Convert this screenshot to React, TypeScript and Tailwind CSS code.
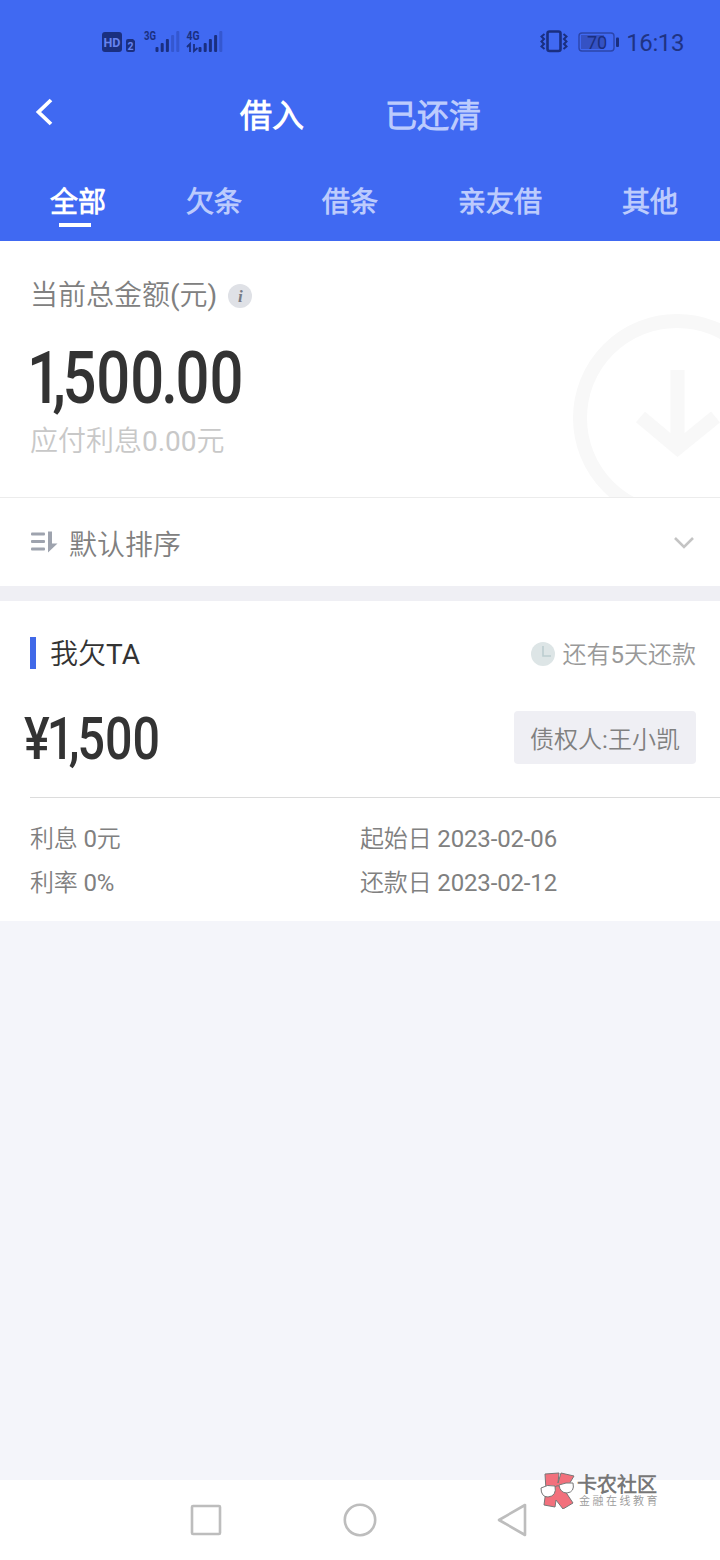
import { clsx } from "clsx";

const tabs = ["全部", "欠条", "借条", "亲友借", "其他"];

const details = [
    { left: "利息 0元", right: "起始日 2023-02-06" },
    { left: "利率 0%", right: "还款日 2023-02-12" },
];

function SignalBars({ active, x }: { active: number; x: number }) {
    const heights = [5, 9, 13, 17, 21];
    return (
        <>
            {heights.map((h, i) => (
                <rect
                    key={h}
                    x={x + i * 5.2}
                    y={52 - h}
                    width="3"
                    height={h}
                    rx="1"
                    fill="#1a2f80"
                    opacity={i < active ? 1 : 0.3}
                />
            ))}
        </>
    );
}

function StatusBar() {
    return (
        <div className="flex h-[84px] items-center justify-between pl-[100px] pr-[36px] text-[#1f3384]">
            <svg width="130" height="84" viewBox="100 0 130 84" className="font-bold">
                <rect x="102" y="32" width="20" height="20" rx="3" fill="#1a2f80" />
                <text x="103.5" y="47" fontSize="13" textLength="17" lengthAdjust="spacingAndGlyphs" fill="#6683f0">HD</text>
                <path d="M126 41q0-2 2-2h5l2 2v9q0 2-2 2h-5q-2 0-2-2z" fill="#1a2f80" />
                <text x="127.5" y="50" fontSize="10.5" fill="#6683f0">2</text>
                <text x="144" y="40" fontSize="13" textLength="12" lengthAdjust="spacingAndGlyphs" fill="#1a2f80">3G</text>
                <SignalBars active={3} x={155.5} />
                <text x="186.5" y="40" fontSize="13" textLength="13" lengthAdjust="spacingAndGlyphs" fill="#1a2f80">4G</text>
                <path d="M187 47l3-3v8M194 44v7l3.500-3" fill="none" stroke="#1a2f80" strokeWidth="1.8" />
                <SignalBars active={4} x={198.5} />
            </svg>
            <div className="flex items-center">
                <svg width="84" height="28" viewBox="537 28 84 28">
                    <rect x="547.5" y="31.5" width="13" height="19.5" rx="2" fill="none" stroke="#1a2f80" strokeWidth="2.6" />
                    <path d="M544.500 34l-3 2.500 2.500 2.500-2.500 2.500 2.500 2.500-2.500 2.500 3 2.500M563.500 34l3 2.500-2.500 2.500 2.500 2.500-2.500 2.500 2.500 2.500-3 2.500" fill="none" stroke="#1a2f80" strokeWidth="2" />
                    <rect x="579" y="33" width="35" height="18" rx="3" fill="none" stroke="#2b45ab" strokeWidth="1.4" />
                    <rect x="581" y="35" width="23" height="14" fill="#3552c4" />
                    <rect x="616" y="37.5" width="3" height="9.5" rx="1" fill="#1a2f80" />
                    <text x="597" y="48.5" fontSize="18" textAnchor="middle" fill="#1a2f80">70</text>
                </svg>
                <span className="ml-[5px] mt-0.5 text-[24px] leading-none tracking-[-0.4px]">16:13</span>
            </div>
        </div>
    );
}

function Header() {
    return (
        <header className="h-[241px] bg-[#4069f2] text-white">
            <StatusBar />
            <div className="flex h-[64px] items-center text-[32px] font-bold">
                <svg width="20" height="30" viewBox="0 0 20 30" className="-mt-2 ml-[35px] mr-[185px]" fill="none" stroke="white" strokeWidth="3.8">
                    <path d="M16 3 3.500 15 16 27" />
                </svg>
                <span>借入</span>
                <span className="ml-[81px] text-[#bccbfd]">已还清</span>
            </div>
            <nav className="flex gap-20 pl-[50px] pt-[34px] text-[28px] font-bold leading-[42px]">
                {tabs.map((tab, i) => (
                    <div key={tab} className={clsx("shrink-0", i > 0 && "text-[#bccbfd]")}>
                        {tab}
                        {i === 0 && <div className="-mt-px ml-[9px] h-1 w-8 bg-white" />}
                    </div>
                ))}
            </nav>
        </header>
    );
}

function Summary() {
    return (
        <section className="relative h-[257px] overflow-hidden border-b border-[#ececec] bg-white pl-[30px] pt-[34px]">
            <svg className="absolute right-0 top-[59px]" width="160" height="197" viewBox="560 300 160 197" fill="none" stroke="#f8f8f8" strokeWidth="14">
                <circle cx="677" cy="418" r="97" />
                <path d="M677.500 370v78M640.500 417l37 31 38-31" />
            </svg>
            <div className="flex items-center text-[28px] leading-[42px] text-[#808080]">
                当前总金额(元)
                <span className="ml-[11px] flex size-6 items-center justify-center rounded-full bg-[#dfe1e6] font-['Liberation_Serif',serif] text-[17px] font-bold italic leading-none text-[#777b85]">
                    i
                </span>
            </div>
            <div className="-ml-[3px] mt-5 h-[84px] origin-left scale-x-[0.83] whitespace-nowrap text-[72px] font-medium leading-[84px] text-[#333]">
                <span className="tracking-[-0.14em]">1</span>
                <span className="tracking-[-0.06em]">,</span>
                50
                <span className="tracking-[-0.05em]">0</span>
                <span className="tracking-[-0.04em]">.</span>
                00
            </div>
            <div className="text-[28px] leading-[42px] text-[#c8c8c8]">应付利息0.00元</div>
        </section>
    );
}

function SortBar() {
    return (
        <div className="flex h-[88px] items-center bg-white pl-[30px] pr-[25px] text-[28px] text-[#808080]">
            <svg width="28" height="24" viewBox="0 0 28 24" fill="#9ea3ae">
                <rect x="1" y="2.5" width="14" height="3" rx="1" />
                <rect x="1" y="10" width="14" height="3" rx="1" />
                <rect x="1" y="17.5" width="14" height="3" rx="1" />
                <path d="M18 1.500h4v12h5.500L18 22.500z" />
            </svg>
            <span className="ml-[11px] mt-[7px]">默认排序</span>
            <svg className="ml-auto" width="22" height="16" viewBox="0 0 22 16" fill="none" stroke="#c4c4c4" strokeWidth="2.6">
                <path d="M2 4l9 9 9-9" />
            </svg>
        </div>
    );
}

function LoanCard() {
    return (
        <section className="h-[320px] bg-white pt-[31px]">
            <div className="flex h-[42px] items-center pl-[30px] pr-6">
                <div className="h-8 w-1.5 bg-[#4169e8]" />
                <span className="ml-3.5 mt-1 text-[28px] text-[#333]">我欠TA</span>
                <svg className="ml-auto mt-0.5" width="24" height="24" viewBox="0 0 24 24">
                    <circle cx="12" cy="12" r="12" fill="#dde5e6" />
                    <path d="M12 4v10h8" fill="none" stroke="#bccdd0" strokeWidth="1.6" />
                </svg>
                <span className="ml-2 mt-1 text-[24px] text-[#999]">还有5天还款</span>
            </div>
            <div className="mt-[37px] flex h-[53px] items-center justify-between pl-6 pr-6">
                <div className="mt-0.5 w-[136px] origin-left scale-x-[0.82] whitespace-nowrap text-[59px] font-medium leading-[60px] text-[#333]">
                    <span className="tracking-[-0.06em]">¥</span>
                    <span className="tracking-[-0.116em]">1</span>
                    <span className="tracking-[-0.04em]">,</span>
                    500
                </div>
                <div className="flex h-[53px] w-[182px] items-center justify-center rounded bg-[#efeff4] pt-1 text-[24px] text-[#808080]">
                    债权人:王小凯
                </div>
            </div>
            <div className="ml-[30px] mt-[33px] border-t border-[#dcdcdc] pt-[19px] text-[24px] leading-[44px] text-[#808080]">
                {details.map((row) => (
                    <div key={row.left} className="flex tracking-[-0.15px]">
                        <span className="w-[330px]">{row.left}</span>
                        <span>{row.right}</span>
                    </div>
                ))}
            </div>
        </section>
    );
}

function Watermark() {
    return (
        <div className="absolute left-[539px] top-[-9px] flex">
            <svg width="37" height="38" viewBox="0 0 37 38" stroke="#777" strokeWidth="1">
                <path d="M6 3l14-1-1 10 3-10 13 3-9 15 8 12-10 6-7-9-1 7-11-2 2-15z" fill="#f2707c" />
                <path d="M2 17q6-4 14-2 2 10-7 11-7 0-7-9zM20 14q7-3 14-2 2 9-6 10-7 0-8-8z" fill="white" />
                <path d="M16 16q2-2 4-1" fill="none" />
            </svg>
            <div className="ml-px mt-1 whitespace-nowrap">
                <div className="text-[20px] font-black leading-[21px] text-[#777]">卡农社区</div>
                <div className="ml-0.5 text-[11px] leading-[12px] tracking-[2.5px] text-[#999]">金融在线教育</div>
            </div>
        </div>
    );
}

function NavBar() {
    return (
        <footer className="relative flex h-20 items-center bg-white">
            <svg width="720" height="80" fill="none" stroke="#bdbdbd" strokeWidth="2.6">
                <rect x="192" y="26" width="28" height="28" rx="1" />
                <circle cx="360" cy="40" r="15.2" />
                <path d="M499 40l26-15v30z" strokeLinejoin="round" />
            </svg>
            <Watermark />
        </footer>
    );
}

export default function App() {
    return (
        <div className="flex h-[1560px] w-[720px] flex-col overflow-hidden bg-[#f4f5fa] font-['Roboto','Noto_Sans_CJK_SC_DemiLight','Noto_Sans_CJK_SC',sans-serif]">
            <Header />
            <Summary />
            <SortBar />
            <div className="h-[15px] bg-[#efeff4]" />
            <LoanCard />
            <main className="flex-1" />
            <NavBar />
        </div>
    );
}
